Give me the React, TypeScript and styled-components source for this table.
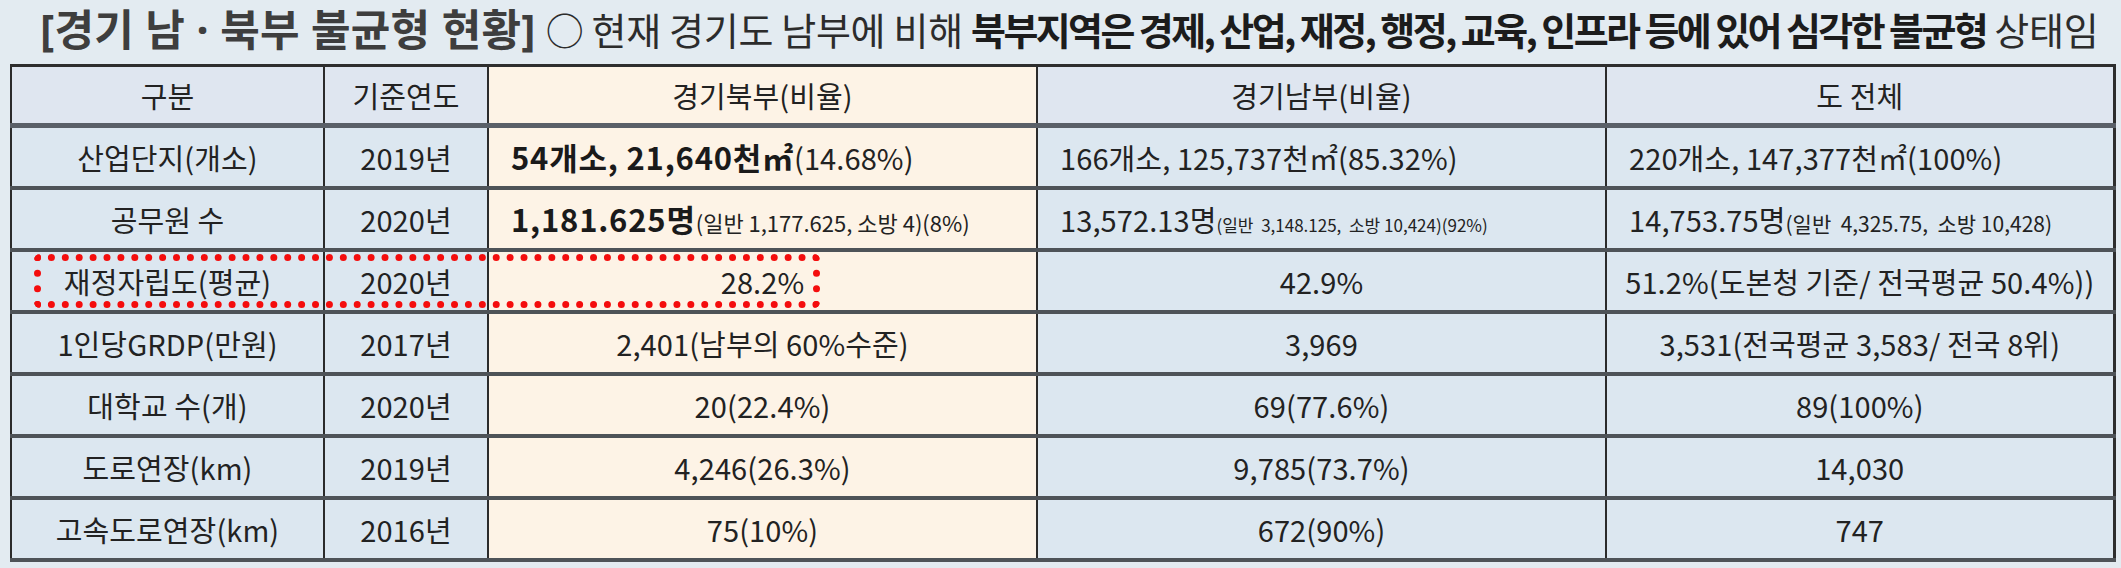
import React from "react";
import styled, { createGlobalStyle } from "styled-components";

const Global = createGlobalStyle`
  html, body { margin: 0; padding: 0; background: #e3ebf1; }
  body { font-family: "Noto Sans CJK KR", "Noto Sans", sans-serif; color: #222; }
`;

const Page = styled.div`
  width: 2121px;
  height: 568px;
  overflow: hidden;
  background: #e3ebf1;
  display: flex;
  flex-direction: column;
`;

const TitleBar = styled.div`
  height: 64px;
  box-sizing: border-box;
  padding: 0 0 6px 40px;
  display: flex;
  align-items: center;
  font-size: 38px;
  line-height: 1;
  white-space: nowrap;
  color: #333;
`;

const TitleHead = styled.span`
  font-family: "Noto Sans", "Noto Sans CJK KR", sans-serif;
  font-weight: 700;
  font-size: 43px;
  color: #3e3e3e;
  margin-right: 10px;
  white-space: pre;
  letter-spacing: 0.2px;
`;

const TitleText = styled.span`
  font-weight: 400;
  color: #2c2c2c;
  white-space: pre;
  letter-spacing: -0.3px;
`;

const TitleStrong = styled.span`
  font-weight: 700;
  color: #1c1c1c;
  white-space: pre;
  letter-spacing: -2.6px;
`;

const TableWrap = styled.div`
  position: relative;
  margin-left: 10px;
  width: 2103px;
`;

const Table = styled.table`
  border-collapse: collapse;
  table-layout: fixed;
  width: 2103px;
  border-top: 3px solid #2e2e2e;
  border-left: 2px solid #2e2e2e;
  border-right: 3px solid #2e2e2e;
  border-bottom: 4px solid #3a3a3a;
`;

const HeadRow = styled.tr`
  height: 60px;
`;

const BodyRow = styled.tr`
  height: 62px;
`;

const Cell = styled.td<{ $cream?: boolean; $left?: boolean; $head?: boolean }>`
  box-sizing: border-box;
  padding: 0;
  padding-left: ${(p) => (p.$left ? "22px" : "0")};
  background: ${(p) => (p.$cream ? "#fdf3e6" : p.$head ? "#dfe6f0" : "#dce7f0")};
  border-left: 2px solid #2b2b2b;
  border-right: 2px solid #2b2b2b;
  border-bottom: ${(p) => (p.$head ? "5px solid #5a6068" : "4px solid #4e5358")};
  text-align: ${(p) => (p.$left ? "left" : "center")};
  vertical-align: middle;
  font-size: 29px;
  font-weight: 400;
  letter-spacing: 0.1px;
  color: #222;
  white-space: nowrap;
  overflow: hidden;
`;

const Bold = styled.span`
  font-weight: 700;
  font-size: 31px;
  color: #1a1a1a;
  letter-spacing: 0.8px;
`;

const Small = styled.span<{ $size: number }>`
  font-size: ${(p) => p.$size}px;
  white-space: pre;
  letter-spacing: 0;
`;

const Highlight = styled.div`
  position: absolute;
  left: 24px;
  top: 190px;
  width: 786px;
  height: 54px;
  box-sizing: border-box;
  border: 7px dotted #f40d0d;
  border-radius: 6px;
  pointer-events: none;
`;

type Row = {
  label: string;
  year: string;
  north: React.ReactNode;
  south: React.ReactNode;
  total: React.ReactNode;
  left?: boolean;
};

const rows: Row[] = [
  {
    label: "산업단지(개소)",
    year: "2019년",
    north: (
      <>
        <Bold>54개소, 21,640천㎡</Bold>(14.68%)
      </>
    ),
    south: "166개소, 125,737천㎡(85.32%)",
    total: "220개소, 147,377천㎡(100%)",
    left: true,
  },
  {
    label: "공무원 수",
    year: "2020년",
    north: (
      <>
        <Bold>1,181.625명</Bold>
        <Small $size={22}>(일반 1,177.625, 소방 4)(8%)</Small>
      </>
    ),
    south: (
      <>
        13,572.13명<Small $size={17}>(일반  3,148.125,  소방 10,424)(92%)</Small>
      </>
    ),
    total: (
      <>
        14,753.75명<Small $size={21}>(일반  4,325.75,  소방 10,428)</Small>
      </>
    ),
    left: true,
  },
  {
    label: "재정자립도(평균)",
    year: "2020년",
    north: "28.2%",
    south: "42.9%",
    total: "51.2%(도본청 기준/ 전국평균 50.4%))",
  },
  {
    label: "1인당GRDP(만원)",
    year: "2017년",
    north: "2,401(남부의 60%수준)",
    south: "3,969",
    total: "3,531(전국평균 3,583/ 전국 8위)",
  },
  {
    label: "대학교 수(개)",
    year: "2020년",
    north: "20(22.4%)",
    south: "69(77.6%)",
    total: "89(100%)",
  },
  {
    label: "도로연장(km)",
    year: "2019년",
    north: "4,246(26.3%)",
    south: "9,785(73.7%)",
    total: "14,030",
  },
  {
    label: "고속도로연장(km)",
    year: "2016년",
    north: "75(10%)",
    south: "672(90%)",
    total: "747",
  },
];

export default function App() {
  return (
    <Page>
      <Global />
      <TitleBar>
        <TitleHead>[경기 남 · 북부 불균형 현황]</TitleHead>
        <TitleText>○ 현재 경기도 남부에 비해 </TitleText>
        <TitleStrong>북부지역은 경제, 산업, 재정, 행정, 교육, 인프라 등에 있어 심각한 불균형</TitleStrong>
        <TitleText> 상태임</TitleText>
      </TitleBar>
      <TableWrap>
        <Table>
          <colgroup>
            <col style={{ width: 313 }} />
            <col style={{ width: 164 }} />
            <col style={{ width: 549 }} />
            <col style={{ width: 569 }} />
            <col style={{ width: 508 }} />
          </colgroup>
          <thead>
            <HeadRow>
              <Cell as="th" $head>구분</Cell>
              <Cell as="th" $head>기준연도</Cell>
              <Cell as="th" $head $cream>경기북부(비율)</Cell>
              <Cell as="th" $head>경기남부(비율)</Cell>
              <Cell as="th" $head>도 전체</Cell>
            </HeadRow>
          </thead>
          <tbody>
            {rows.map((r) => (
              <BodyRow key={r.label}>
                <Cell>{r.label}</Cell>
                <Cell>{r.year}</Cell>
                <Cell $cream $left={r.left}>{r.north}</Cell>
                <Cell $left={r.left}>{r.south}</Cell>
                <Cell $left={r.left}>{r.total}</Cell>
              </BodyRow>
            ))}
          </tbody>
        </Table>
        <Highlight />
      </TableWrap>
    </Page>
  );
}
